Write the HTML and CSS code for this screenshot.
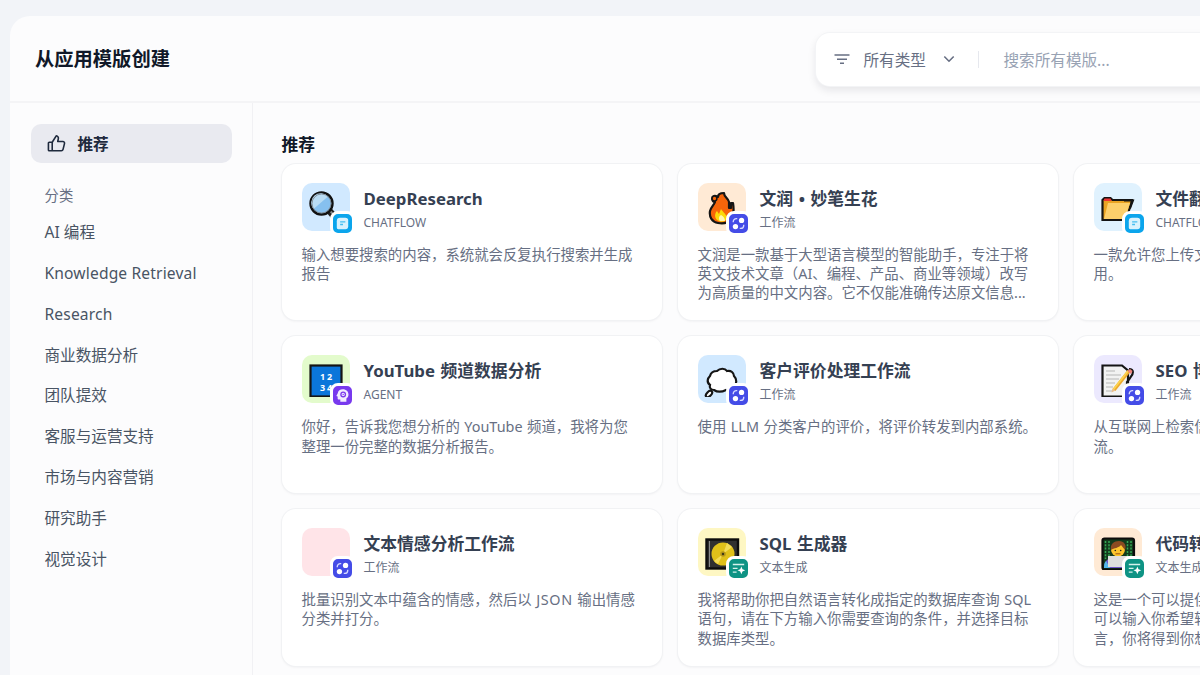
FILE: index.html
```html
<!DOCTYPE html>
<html lang="zh-CN">
<head>
    <meta charset="UTF-8">
    <title>从应用模版创建</title>
    <link rel="stylesheet" href="styles.css">
</head>
<body>

    <!-- 公用图标 -->
    <svg class="sprite" width="0" height="0">
        <symbol id="badge-chatflow" viewBox="0 0 20 20">
            <path d="M7.500 4h5.500a3 3 0 0 1 3 3v6a3 3 0 0 1-3 3H5.500A1.500 1.500 0 0 1 4 14.500V7.500A3.500 3.500 0 0 1 7.500 4z" fill="#d9f2fd"/>
            <path d="M7.500 8.300h5.500M7.500 11h3" stroke="#45bdf0" stroke-width="1.500"/>
        </symbol>
        <symbol id="badge-workflow" viewBox="0 0 20 20">
            <circle cx="13.200" cy="6.800" r="2.800" fill="#fff"/>
            <circle cx="6.800" cy="13.200" r="2.800" fill="#fff"/>
            <path d="M4.500 8.800V8a3.200 3.200 0 0 1 3.200-3.200h1M15.500 11.200v.8a3.200 3.200 0 0 1-3.200 3.200h-1" fill="none" stroke="#d6d9ff" stroke-width="1.400"/>
        </symbol>
        <symbol id="badge-agent" viewBox="0 0 20 20">
            <path d="M10.300 3.400c3.600 0 6 2.400 6 5.500 0 2-.9 3.400-2.200 4.300v3.300H7.700v-2.200H6c-.8 0-1.100-.4-1.100-1.100v-2.100l-1.400-.6L5 7.600c.3-2.500 2.500-4.200 5.300-4.200z" fill="#f2ebff"/>
            <circle cx="10.700" cy="8.900" r="2.400" fill="none" stroke="#7c3aed" stroke-width="1.400"/>
            <circle cx="10.700" cy="8.900" r=".7" fill="#7c3aed"/>
        </symbol>
        <symbol id="badge-text" viewBox="0 0 20 20">
            <path d="M4 5.800h12M4 9.800h5M4 13.800h4" stroke="#d5f1ec" stroke-width="1.400"/>
            <path d="M13 7.800l1.200 2.900 2.900 1.200-2.900 1.200L13 16l-1.200-2.900-2.900-1.200 2.900-1.200z" fill="#fff"/>
        </symbol>
    </svg>

    <div class="dialog">
        <div class="header">
            <h1 class="title">从应用模版创建</h1>
            <div class="search-bar">
                <svg class="filter-icon" viewBox="0 0 16 12"><path d="M.5 2h15M3 6.200h10M6 10.300h4" stroke="currentColor" stroke-width="1.500"/></svg>
                <span class="filter-label">所有类型</span>
                <svg class="arrow-icon" viewBox="0 0 12 8"><path d="M1.300 1.500L6 6.200l4.700-4.700" fill="none" stroke="currentColor" stroke-width="1.600"/></svg>
                <span class="divider"></span>
                <span class="placeholder">搜索所有模版...</span>
            </div>
        </div>

        <div class="main">
            <!-- 左侧分类 -->
            <div class="sidebar">
                <div class="nav-active">
                    <svg class="thumb-icon" viewBox="0 0 20 20">
                        <path d="M5.500 8.700v9M5.500 17.700H2.300a.8.8 0 0 1-.8-.8V9.500a.8.8 0 0 1 .8-.8h3.200L9.700 1.900c1.700.3 2.600 1.700 2.200 3.300l-.6 2.700h5.400c1.200 0 2 1 1.700 2.200l-1.500 6.100c-.2.9-.9 1.500-1.800 1.500z" fill="none" stroke="currentColor" stroke-width="1.700" stroke-linejoin="round"/>
                    </svg>
                    <span>推荐</span>
                </div>
                <div class="nav-caption">分类</div>
                <ul class="nav-list">
                    <li>AI 编程</li>
                    <li><span class="nav-en">Knowledge Retrieval</span></li>
                    <li><span class="nav-en">Research</span></li>
                    <li>商业数据分析</li>
                    <li>团队提效</li>
                    <li>客服与运营支持</li>
                    <li>市场与内容营销</li>
                    <li>研究助手</li>
                    <li>视觉设计</li>
                </ul>
            </div>

            <!-- 模版列表 -->
            <div class="content">
                <h2 class="section-title">推荐</h2>
                <div class="cards">
                    <div class="card">
                        <div class="card-head">
                            <div class="app-icon bg-blue">
                                <svg class="emoji" viewBox="0 0 36 36">
                                    <path d="M20 21l4 3M23 21l8 9M20 23l5 6" stroke="#222" stroke-width="3"/>
                                    <path d="M22 22l7 7" stroke="#888" stroke-width="1.800"/>
                                    <circle cx="13.500" cy="14.500" r="11" fill="#86c0ef" stroke="#111" stroke-width="2.400"/>
                                    <path d="M5.500 20A9.500 9.500 0 0 1 20 7.500z" fill="#b9dcf4"/>
                                    <circle cx="13.500" cy="14.500" r="9.500" fill="none" stroke="#7c858c" stroke-width=".9"/>
                                </svg>
                                <span class="badge chatflow"><svg><use href="#badge-chatflow"/></svg></span>
                            </div>
                            <div class="card-info">
                                <div class="card-name">DeepResearch</div>
                                <div class="card-type">CHATFLOW</div>
                            </div>
                        </div>
                        <p class="card-desc">输入想要搜索的内容，系统就会反复执行搜索并生成<br>报告</p>
                    </div>

                    <div class="card">
                        <div class="card-head">
                            <div class="app-icon bg-orange">
                                <svg class="emoji" viewBox="0 0 36 36">
                                    <path d="M14 34C8 33 5 28 6 22c1-4 4-6 5-9-3 0-4-5-1-6 2-1 3 1 4 1 0-3 3-4 6-4 0 4 4 5 5 9v6h2v-5h2c1 6 1 12-2 16-3 4-8 5-13 4z" fill="#f6650a" stroke="#151515" stroke-width="2.200" stroke-linejoin="round"/>
                                    <circle cx="10.500" cy="9.500" r="2.400" fill="#f6650a" stroke="#151515" stroke-width="1.500"/>
                                    <path d="M13 31c-3-3-2-7 0-9l2 3 2-5c2 3 6 6 6 9-1 4-6 5-10 2z" fill="#fbd90a"/>
                                    <path d="M16 32c-2-2-1-5 1-6 2 1 4 3 4 6z" fill="#fff6b0"/>
                                </svg>
                                <span class="badge workflow"><svg><use href="#badge-workflow"/></svg></span>
                            </div>
                            <div class="card-info">
                                <div class="card-name">文润 • 妙笔生花</div>
                                <div class="card-type">工作流</div>
                            </div>
                        </div>
                        <p class="card-desc">文润是一款基于大型语言模型的智能助手，专注于将<br>英文技术文章（AI、编程、产品、商业等领域）改写<br>为高质量的中文内容。它不仅能准确传达原文信息...</p>
                    </div>

                    <div class="card">
                        <div class="card-head">
                            <div class="app-icon bg-sky">
                                <svg class="emoji" viewBox="0 0 36 36">
                                    <path d="M2.500 31V11l2-2h6l2 2H32l-1 4-5 16z" fill="#e9a323" stroke="#141414" stroke-width="2.200"/>
                                    <path d="M4.500 9.500h6l1 2.500H3.600z" fill="#e33"/>
                                    <path d="M8 14h22l-5 16H4z" fill="#fccf6b"/>
                                    <path d="M24 11.500h9l-3 8" fill="none" stroke="#141414" stroke-width="2"/>
                                </svg>
                                <span class="badge chatflow"><svg><use href="#badge-chatflow"/></svg></span>
                            </div>
                            <div class="card-info">
                                <div class="card-name">文件翻译</div>
                                <div class="card-type">CHATFLOW</div>
                            </div>
                        </div>
                        <p class="card-desc">一款允许您上传文件并进行翻译的应用，方便您的使<br>用。</p>
                    </div>

                    <div class="card">
                        <div class="card-head">
                            <div class="app-icon bg-green">
                                <svg class="emoji" viewBox="0 0 36 36">
                                    <rect x="2.500" y="4.500" width="31" height="31" fill="#0b76da" stroke="#151515" stroke-width="2.200"/>
                                    <text class="digits" x="12" y="18.500">1</text>
                                    <text class="digits" x="19" y="18.500">2</text>
                                    <text class="digits" x="12" y="29.500">3</text>
                                    <text class="digits" x="19" y="29.500">4</text>
                                </svg>
                                <span class="badge agent"><svg><use href="#badge-agent"/></svg></span>
                            </div>
                            <div class="card-info">
                                <div class="card-name">YouTube 频道数据分析</div>
                                <div class="card-type">AGENT</div>
                            </div>
                        </div>
                        <p class="card-desc">你好，告诉我您想分析的 YouTube 频道，我将为您<br>整理一份完整的数据分析报告。</p>
                    </div>

                    <div class="card">
                        <div class="card-head">
                            <div class="app-icon bg-blue">
                                <svg class="emoji" viewBox="0 0 36 36">
                                    <path d="M10 29c-3 0-5-2-4-5-4-3-2-7 0-9 1-4 4-5 7-5 3-3 8-3 10 0 4-1 7 2 7 5 3 3 3 8 0 10 0 4-4 6-8 4-4 2-9 2-12 0z" fill="#fff" stroke="#151515" stroke-width="2.200"/>
                                    <ellipse cx="5" cy="33" rx="3.800" ry="2.200" transform="rotate(-45 5 33)" fill="#fff" stroke="#151515" stroke-width="2.200"/>
                                </svg>
                                <span class="badge workflow"><svg><use href="#badge-workflow"/></svg></span>
                            </div>
                            <div class="card-info">
                                <div class="card-name">客户评价处理工作流</div>
                                <div class="card-type">工作流</div>
                            </div>
                        </div>
                        <p class="card-desc">使用 LLM 分类客户的评价，将评价转发到内部系统。</p>
                    </div>

                    <div class="card">
                        <div class="card-head">
                            <div class="app-icon bg-violet">
                                <svg class="emoji" viewBox="0 0 36 36">
                                    <path d="M2.500 4.500H22l6 5v26H2.500z" fill="#f2f2f2" stroke="#151515" stroke-width="2.200"/>
                                    <path d="M6 10h9M6 14h15M6 18h13M6 22h9M6 26h7M6 30h7" stroke="#b5b5b5" stroke-width="1.200"/>
                                    <path d="M29 8c5 0 5 5 1 9l-3 4v5" fill="none" stroke="#151515" stroke-width="2.200"/>
                                    <path d="M29 10L14 29" stroke="#eda92c" stroke-width="3.600"/>
                                    <path d="M28 10L13 29" stroke="#fcd34f" stroke-width="1.800"/>
                                    <path d="M27.500 10l3.500 3 1.500-3-2.500-2z" fill="#ef8078"/>
                                    <path d="M12.500 27.500l3 2-4 2z" fill="#e9bd8c"/>
                                </svg>
                                <span class="badge workflow"><svg><use href="#badge-workflow"/></svg></span>
                            </div>
                            <div class="card-info">
                                <div class="card-name">SEO 博客生成器</div>
                                <div class="card-type">工作流</div>
                            </div>
                        </div>
                        <p class="card-desc">从互联网上检索信息并自动生成优化博客的完整工作<br>流。</p>
                    </div>

                    <div class="card">
                        <div class="card-head">
                            <div class="app-icon bg-pink">
                                <span class="badge workflow"><svg><use href="#badge-workflow"/></svg></span>
                            </div>
                            <div class="card-info">
                                <div class="card-name">文本情感分析工作流</div>
                                <div class="card-type">工作流</div>
                            </div>
                        </div>
                        <p class="card-desc">批量识别文本中蕴含的情感，然后以 <span class="code-word">JSON</span> 输出情感<br>分类并打分。</p>
                    </div>

                    <div class="card">
                        <div class="card-head">
                            <div class="app-icon bg-yellow">
                                <svg class="emoji" viewBox="0 0 36 36">
                                    <rect x="2.500" y="5.500" width="31.500" height="29" fill="#303030" stroke="#0c0c0c" stroke-width="2.400"/>
                                    <path d="M5.500 7v26" stroke="#8a8a8a"/>
                                    <circle cx="19" cy="20" r="11.500" fill="#e0c11a"/>
                                    <path d="M19 20l4-11 5 4zM19 20l-9 7 4 3z" fill="#f3dc58"/>
                                    <circle cx="19" cy="20" r="2.800" fill="#b7981a"/>
                                    <circle cx="19" cy="20" r="1.200" fill="#3f3a1a"/>
                                </svg>
                                <span class="badge text"><svg><use href="#badge-text"/></svg></span>
                            </div>
                            <div class="card-info">
                                <div class="card-name">SQL 生成器</div>
                                <div class="card-type">文本生成</div>
                            </div>
                        </div>
                        <p class="card-desc">我将帮助你把自然语言转化成指定的数据库查询 SQL<br>语句，请在下方输入你需要查询的条件，并选择目标<br>数据库类型。</p>
                    </div>

                    <div class="card">
                        <div class="card-head">
                            <div class="app-icon bg-orange">
                                <svg class="emoji" viewBox="0 0 36 36">
                                    <rect x="2.500" y="4.500" width="31.500" height="31" rx="2" fill="#123a1d" stroke="#0c0c0c" stroke-width="2.200"/>
                                    <path d="M5.500 7v18M9 7v16M27.500 7v16M31 7v18" stroke="#35a853" stroke-width="1.500" stroke-dasharray="2 1.300"/>
                                    <path d="M4 34c0-8 5-11 14-11s15 3 15 11z" fill="#6e54c8"/>
                                    <path d="M4 34c0-3 0-5 2-7l4 7z" fill="#52b7ea"/>
                                    <circle cx="18" cy="15.500" r="7" fill="#fdc42c"/>
                                    <path d="M11 16c-1-6 3-9 8-9s8 4 6 9l-4-5c-2 3-7 3-10 5z" fill="#8b4b22"/>
                                    <circle cx="15.300" cy="16.500" r=".8" fill="#222"/>
                                    <circle cx="20.700" cy="16.500" r=".8" fill="#222"/>
                                    <path d="M15.500 19.800h5" stroke="#9c5312"/>
                                    <path d="M8 22h24v11H8z" fill="#dedede"/>
                                </svg>
                                <span class="badge text"><svg><use href="#badge-text"/></svg></span>
                            </div>
                            <div class="card-info">
                                <div class="card-name">代码转换器</div>
                                <div class="card-type">文本生成</div>
                            </div>
                        </div>
                        <p class="card-desc">这是一个可以提供多种编程语言互相转换的工具，你<br>可以输入你希望转换的代码，再选择需要的编程语<br>言，你将得到你想要的代码。</p>
                    </div>
                </div>
            </div>
        </div>
    </div>

</body>
</html>
```
FILE: styles.css
```css
* {
    box-sizing: border-box;
}

body {
    margin: 0;
    height: 675px;
    padding: 16px 0 0 10px;
    overflow: hidden;
    background: #f2f4f8;
    font-family: "Noto Sans", "Noto Sans CJK SC", sans-serif;
    color: #676f83;
}

h1, h2, p, ul {
    margin: 0;
    padding: 0;
}

.sprite {
    display: block;
}

.dialog {
    height: 659px;
    overflow: hidden;
    background: #fcfcfd;
    border-radius: 20px 0 0 0;
}

.header {
    display: flex;
    align-items: center;
    height: 87px;
    padding: 1px 0 0 25px;
    border-bottom: 2px solid #f4f4f6;
}

.title {
    flex: none;
    width: 780.5px;
    font-size: 19.3px;
    line-height: 28px;
    color: #101828;
}

.search-bar {
    display: flex;
    flex: none;
    align-items: center;
    width: 580px;
    height: 53px;
    padding-left: 18px;
    background: #fff;
    border-radius: 14px;
    box-shadow: 0 0 0 1px #f3f4f6, 0 4px 8px rgba(16, 24, 40, 0.1);
    font-size: 15.6px;
}

.filter-icon {
    width: 16px;
    height: 12px;
    margin-right: 14px;
}

.filter-label {
    width: 64px;
}

.arrow-icon {
    width: 12px;
    height: 8px;
    margin-left: 15px;
}

.divider {
    width: 1px;
    height: 17px;
    margin: 0 25px 0 23px;
    background: #e6e8ee;
}

.placeholder {
    color: #98a2b3;
}

.main {
    display: flex;
}

/* 左侧分类 */
.sidebar {
    flex: none;
    width: 242.5px;
    height: 640px;
    padding: 21px 20px 0 20.5px;
    border-right: 1px solid #f1f1f4;
}

.nav-active {
    display: flex;
    align-items: center;
    gap: 12px;
    height: 39px;
    padding-left: 16px;
    background: #e9eaf0;
    border-radius: 10px;
    font-size: 15.6px;
    font-weight: bold;
    color: #1f2a3d;
}

.thumb-icon {
    width: 19px;
    height: 19px;
}

.nav-caption {
    margin: 21px 0 4px 14px;
    font-size: 14.4px;
    line-height: 24px;
}

.nav-list {
    padding-left: 14px;
    list-style: none;
    font-size: 15.6px;
    line-height: 40.85px;
    color: #495464;
}

.nav-list li {
    height: 40.85px;
}

.nav-en {
    letter-spacing: 0.15px;
}

/* 模版列表 */
.content {
    flex: none;
    padding: 30px 0 0 29px;
}

.section-title {
    height: 30.5px;
    font-size: 16.8px;
    line-height: 24px;
    color: #101828;
}

.cards {
    display: grid;
    grid-template-columns: repeat(3, 380px);
    grid-auto-rows: 156.800px;
    gap: 16px;
}

.card {
    padding: 19px 20px 0 20px;
    background: #fff;
    border-radius: 14px;
    box-shadow: 0 0 0 1px #f1f2f4, 0 1px 3px rgba(16, 24, 40, 0.08);
}

.card-head {
    display: flex;
    gap: 14px;
    height: 62px;
}

.app-icon {
    position: relative;
    flex: none;
    width: 48px;
    height: 48px;
    padding: 6px;
    border-radius: 10px;
}

.emoji {
    display: block;
    width: 36px;
    height: 36px;
}

.digits {
    fill: #fff;
    font-size: 9px;
    font-weight: bold;
}

.bg-blue { background: #d1e9ff; }
.bg-sky { background: #e0f2fe; }
.bg-orange { background: #ffead5; }
.bg-green { background: #e3fbcc; }
.bg-violet { background: #ece9fe; }
.bg-pink { background: #ffe4e8; }
.bg-yellow { background: #fef7c3; }

.badge {
    position: absolute;
    right: -5px;
    bottom: -5px;
    width: 25px;
    height: 25px;
    border: 3px solid #fff;
    border-radius: 8px;
}

.badge svg {
    display: block;
    width: 19px;
    height: 19px;
}

.chatflow { background: #0ba5ec; }
.workflow { background: #444ce7; }
.agent { background: #7839ee; }
.text { background: #0e9384; }

.card-name {
    height: 30px;
    font-size: 16.8px;
    font-weight: bold;
    line-height: 31px;
    word-spacing: 1.2px;
    white-space: nowrap;
    color: #354052;
}

.card-type {
    font-size: 12px;
    line-height: 19px;
}

.card-desc {
    font-size: 14.4px;
    line-height: 19.2px;
    word-spacing: 0.8px;
    white-space: nowrap;
}

.code-word {
    letter-spacing: 0.6px;
}
```
